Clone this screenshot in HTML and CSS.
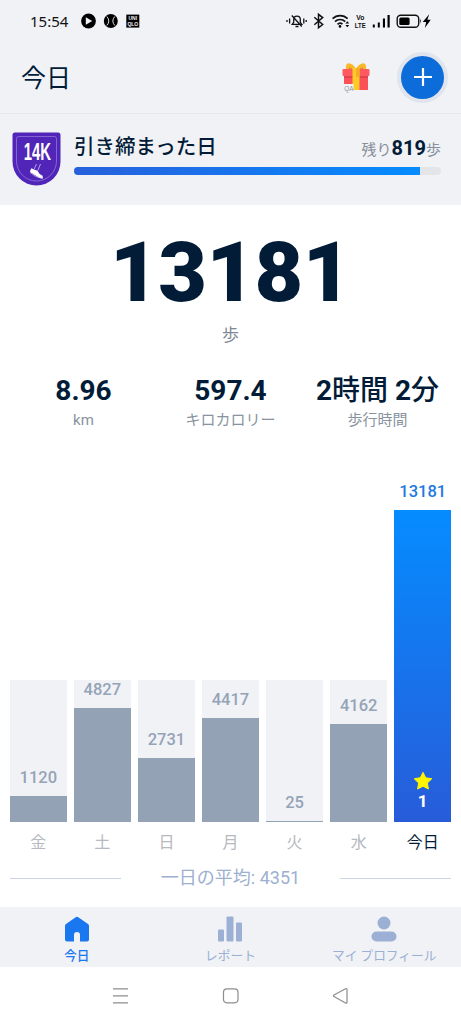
FILE: index.html
```html
<!DOCTYPE html>
<html lang="ja">
<head>
  <meta charset="UTF-8" />
  <meta name="viewport" content="width=device-width, initial-scale=1.0"/>
  <title>今日</title>
  <link rel="stylesheet" href="styles.css">
</head>
<body>

<!-- Status bar -->
<div class="status-bar">
  <span class="clock">15:54</span>
  <svg class="app-icons" width="62" height="20" viewBox="0 0 62 20">
    <circle cx="10.5" cy="10" r="7.4"/>
    <path d="M7.8 6.3v7.4l6.4-3.7z" fill="#f0f2f6"/>
    <circle cx="32.8" cy="10" r="7"/>
    <path d="M28.8 5.5q4 4.5 0 9M36.8 5.5q-4 4.5 0 9" fill="none" stroke="#f0f2f6" stroke-width=".9"/>
    <rect x="48.3" y="3.6" width="13" height="13"/>
    <text x="54.8" y="9.4" class="tiny-logo">UNI</text>
    <text x="54.8" y="15.4" class="tiny-logo">QLO</text>
  </svg>
  <svg class="sys-icons" width="148" height="20" viewBox="0 0 148 20">
    <!-- muted bell -->
    <g fill="none" stroke="#111" stroke-width="1.3">
      <path d="M6.2 13.3h9.6l-1.5-2V8.5a3.3 3.3 0 0 0-6.6 0v2.8zM9.5 15.5h3M5.8 4.5l10 11"/>
      <path d="M3.6 7.5v5M1 9v2M17.8 7.5v5M20.2 9v2"/>
    </g>
    <!-- bluetooth -->
    <path d="M28.3 6.3l8.4 7.2-4.2 3.3V3.3l4.2 3.3-8.4 7.2" fill="none" stroke="#111" stroke-width="1.5"/>
    <!-- wifi -->
    <path d="M46.6 7.7a10.5 10.5 0 0 1 15 0M49 10.7a7 7 0 0 1 10.2 0M51.5 13.3a3.7 3.7 0 0 1 5-.2" fill="none" stroke="#111" stroke-width="1.7"/>
    <circle cx="54" cy="15.4" r="1.3"/>
    <path d="M61.3 10.3l1.9 2.3h-3.8zM61.3 16.2l1.9-2.3h-3.8z"/>
    <text transform="translate(74.3 9) scale(.85 1)" class="volte">Vo</text>
    <text transform="translate(74.3 16.8) scale(.75 1)" class="volte">LTE</text>
    <!-- signal -->
    <path d="M86.8 13.6h2v3h-2zM91.8 11.5h2v5.1h-2zM96.9 7.5h2.1v9.1h-2.1zM101.5 4h2.2v12.6h-2.2z"/>
    <!-- battery -->
    <rect x="111.2" y="4.3" width="21.5" height="11.9" rx="3.5" fill="none" stroke="#111" stroke-width="1.4"/>
    <rect x="113.3" y="6.4" width="10.3" height="7.7" rx="1.5"/>
    <path d="M134 7.8q1.800 2.300 0 4.600z"/>
    <path d="M143.2 3.2l-6.500 7.900h3.500l-1.400 5.800 6-8.100h-3.400z"/>
  </svg>
</div>

<!-- Header -->
<div class="header">
  <h1>今日</h1>
  <svg class="gift" width="30" height="32" viewBox="0 0 30 32">
    <path d="M5 9q-1-8 4-6.500 4 1 6 5.500 2-4.500 6-5.500 5-1.500 4 6.500z" fill="#f9b92e"/>
    <path d="M8 8q0-4 3 0zM19 8q3-4 3 0z" fill="#e58e25"/>
    <rect x="1.500" y="8" width="27" height="7" rx="1" fill="#ff5a5f"/>
    <path d="M3 15h24v14H3z" fill="#fb5058"/>
    <path d="M3 15h24v2H3z" fill="#e0444e"/>
    <path d="M11.500 7h7v22h-7z" fill="#ffc928"/>
    <path d="M15 7h3.500v9H15z" fill="#f5ac26"/>
    <path d="M2 23h10.500v7H2z" fill="#f0f2f6"/>
    <text transform="translate(3.200 29.500) scale(.85 1)">QA</text>
  </svg>
  <button class="add-btn" aria-label="追加">
    <svg width="20" height="20" viewBox="0 0 20 20"><path d="M10 1v18M1 10h18" stroke="#fff" stroke-width="2.2"/></svg>
  </button>
</div>

<!-- Goal -->
<div class="goal">
  <svg class="badge" width="49" height="54" viewBox="0 0 49 54">
    <path d="M3 .5h43a2.500 2.500 0 0 1 2.500 2.500v26.500a24 24 0 0 1-48 0V3A2.500 2.500 0 0 1 3 .5z" fill="#5125b8"/>
    <path d="M6.500 4.500h36q2 0 2 2V29a20 20 0 0 1-40 0V6.500q0-2 2-2z" fill="none" stroke="#8f75da" stroke-width=".8"/>
    <text transform="translate(25.300 27.500) scale(.62 1)">14K</text>
    <path d="M24.500 32l-2.300 5M28.500 32l-2.700 6.500" stroke="#cfc3ef" stroke-width=".8" fill="none"/>
    <path d="M19.500 36.300l2.500 1.200 3.500 1.300q1.500 3.500 5 5l.5 2.700q-4.500-.3-7.500-3l-5.500-3.500q.2-2 1.500-3.700z" fill="#fff"/>
    <path d="M18 40.500q5 5 12.500 6" stroke="#cfc3ef" stroke-width=".7" fill="none"/>
  </svg>
  <div class="goal-info">
    <div class="goal-text">
      <h2>引き締まった日</h2>
      <p>残り<b>819</b>歩</p>
    </div>
    <div class="progress"><div class="progress-fill" style="width: 94.15%"></div></div>
  </div>
</div>

<main>
  <div class="steps">
    <div class="steps-count">13181</div>
    <div class="steps-unit">歩</div>
  </div>

  <div class="stats">
    <div><b>8.96</b><span>km</span></div>
    <div><b>597.4</b><span>キロカロリー</span></div>
    <div><b>2<i>時間</i> 2<i>分</i></b><span>歩行時間</span></div>
  </div>

  <!-- Weekly chart -->
  <div class="chart">
    <div class="day">
      <div class="track"><span>1120</span><div class="bar" style="height: 26px"></div></div>
      <p>金</p>
    </div>
    <div class="day">
      <div class="track"><span>4827</span><div class="bar" style="height: 114px"></div></div>
      <p>土</p>
    </div>
    <div class="day">
      <div class="track"><span>2731</span><div class="bar" style="height: 64px"></div></div>
      <p>日</p>
    </div>
    <div class="day">
      <div class="track"><span>4417</span><div class="bar" style="height: 104px"></div></div>
      <p>月</p>
    </div>
    <div class="day">
      <div class="track"><span>25</span><div class="bar" style="height: 1px"></div></div>
      <p>火</p>
    </div>
    <div class="day">
      <div class="track"><span>4162</span><div class="bar" style="height: 98px"></div></div>
      <p>水</p>
    </div>
    <div class="day today">
      <div class="track">
        <span>13181</span>
        <div class="bar" style="height: 312px">
          <svg width="20" height="20" viewBox="0 0 20 20"><path d="M10 1.300l2.700 5.500 6.100.9-4.400 4.300 1 6L10 15.200 4.600 18l1-6L1.200 7.700l6.100-.9z" fill="#fff500" stroke="#fff500" stroke-linejoin="round"/></svg>
          <b>1</b>
        </div>
      </div>
      <p>今日</p>
    </div>
  </div>

  <div class="average">一日の平均: 4351</div>
</main>

<!-- Tabs -->
<div class="tabs">
  <a class="active">
    <svg width="26" height="26" viewBox="0 0 26 26"><path d="M13 .8q.7 0 1.300.4l9.700 6.700q1 .7 1 1.900v13.700q0 2-2 2h-7v-6.700a3 2.800 0 0 0-6 0v6.700H3q-2 0-2-2V9.800q0-1.200 1-1.900l9.700-6.700q.6-.4 1.300-.4z"/></svg>
    今日
  </a>
  <a>
    <svg width="26" height="26" viewBox="0 0 26 26"><rect x="1" y="13.500" width="6" height="12" rx="1"/><rect x="9.500" y=".5" width="7" height="25" rx="1"/><rect x="19" y="6.500" width="6" height="19" rx="1"/></svg>
    レポート
  </a>
  <a>
    <svg width="26" height="26" viewBox="0 0 26 26"><circle cx="13" cy="7" r="6.500"/><rect x=".5" y="15.500" width="25" height="10" rx="5"/></svg>
    マイ プロフィール
  </a>
</div>

<!-- System navigation -->
<div class="nav">
  <svg width="18" height="18" viewBox="0 0 18 18"><path d="M1 1.800h15M1 8.800h15M1 15.800h15"/></svg>
  <svg width="18" height="18" viewBox="0 0 18 18"><rect x="1.500" y="1.800" width="14.500" height="14" rx="3.500"/></svg>
  <svg width="18" height="18" viewBox="0 0 18 18"><path d="M2 8.100L13.500 1.700q1.500-.6 1.500 1v12.200q0 1.600-1.500 1L2 9.500q-1.200-.7 0-1.400z"/></svg>
</div>

</body>
</html>
```

FILE: styles.css
```css
* { margin: 0; padding: 0; box-sizing: border-box; }
body {
  font-family: Roboto, 'Noto Sans CJK JP', sans-serif;
  background: #fff;
  color: #021c38;
  display: flex;
  flex-direction: column;
  height: 1024px;
  overflow: hidden;
}

svg {
  display: block;
  flex: none;
}

.status-bar {
  height: 41px;
  background: #f0f2f6;
  display: flex;
  align-items: center;
  padding: 0 27px 0 30px;
}

.clock {
  font-family: 'Noto Sans', sans-serif;
  font-size: 15px;
  color: #111;
  width: 48px;
  white-space: nowrap;
}

.sys-icons {
  margin-left: auto;
}

.tiny-logo {
  font: bold 5px 'Liberation Sans', sans-serif;
  fill: #f0f2f6;
  text-anchor: middle;
}

.volte {
  font: bold 8px/1 'Liberation Sans', sans-serif;
  fill: #111;
  text-anchor: middle;
}

.header {
  height: 73px;
  background: #f0f2f6;
  border-bottom: 1px solid #e6e8ed;
  display: flex;
  align-items: center;
  padding: 0 13px 0 21px;
}

.header h1 {
  font-size: 25px;
  font-weight: 400;
  line-height: 36px;
  padding-top: 3px;
}

.gift {
  margin-left: auto;
  margin-right: 26px;
}

.gift text {
  font: 7.5px 'Liberation Sans', sans-serif;
  fill: #8d929b;
}

.add-btn {
  width: 51px;
  height: 51px;
  border-radius: 50%;
  border: 4px solid #dfe4ed;
  background: #0b6cda;
  display: flex;
  align-items: center;
  justify-content: center;
}

.goal {
  height: 91px;
  background: #f0f2f6;
  display: flex;
  padding: 18px 20px 0 12px;
}

.badge text {
  font: bold 24px 'Liberation Sans', sans-serif;
  fill: #fff;
  text-anchor: middle;
}

.goal-info {
  flex: 1;
  margin-left: 13px;
}

.goal-text {
  display: flex;
  justify-content: space-between;
  height: 35px;
}

.goal-text h2 {
  font-size: 20.5px;
  font-weight: 500;
  line-height: 31px;
}

.goal-text p {
  font-size: 15px;
  line-height: 32px;
  color: #878f9b;
}

.goal-text b {
  font-size: 20px;
  color: #021c38;
}

.progress {
  height: 8px;
  border-radius: 4px;
  background: #e3e5e9;
  overflow: hidden;
}

.progress-fill {
  height: 100%;
  background: linear-gradient(90deg, #2860dc, #058cff);
}

main {
  height: 702px;
  padding: 0 10px;
}

.steps {
  text-align: center;
  padding-top: 19px;
}

.steps-count {
  font-size: 84px;
  font-weight: 900;
  line-height: 98px;
  letter-spacing: -0.5px;
}

.steps-unit {
  font-size: 17px;
  line-height: 26px;
  color: #7f8995;
}

.stats {
  display: grid;
  grid-template-columns: repeat(3, 1fr);
  text-align: center;
  padding-top: 25px;
}

.stats b {
  display: block;
  font-size: 28px;
  line-height: 36px;
  white-space: nowrap;
}

.stats i {
  font-style: normal;
  font-weight: 500;
}

.stats span {
  display: block;
  font-size: 15px;
  line-height: 22px;
  color: #8993a0;
}

.chart {
  display: grid;
  grid-template-columns: repeat(7, 1fr);
  gap: 7.5px;
  align-items: end;
  height: 424px;
}

.track {
  height: 142px;
  background: #f0f2f6;
  display: flex;
  flex-direction: column;
  justify-content: flex-end;
}

.track span {
  font-size: 16.5px;
  font-weight: 500;
  line-height: 20px;
  margin-bottom: 8px;
  text-align: center;
  color: #95a3b7;
}

.bar {
  flex: none;
  background: #93a3b5;
}

.day p {
  font-size: 16px;
  line-height: 24px;
  padding-top: 9px;
  text-align: center;
  color: #b6b9be;
}

.today .track {
  height: auto;
  background: none;
}

.today .track span {
  color: #2478df;
}

.today .bar {
  background: linear-gradient(#058cff, #285cd9);
  color: #fff;
  display: flex;
  flex-direction: column;
  align-items: center;
  justify-content: flex-end;
  padding-bottom: 11px;
}

.today .bar b {
  font-size: 17px;
  line-height: 20px;
}

.today p {
  color: #021c38;
}

.average {
  display: flex;
  align-items: center;
  justify-content: space-between;
  font-size: 18px;
  line-height: 26px;
  margin-top: 10px;
  color: #9db0d0;
  white-space: nowrap;
}

.average::before,
.average::after {
  content: "";
  width: 111px;
  height: 1px;
  background: #c9d5e6;
}

.tabs {
  height: 60px;
  background: #f0f2f5;
  display: grid;
  grid-template-columns: repeat(3, 1fr);
}

.tabs a {
  display: flex;
  flex-direction: column;
  align-items: center;
  padding-top: 9px;
  font-size: 12.7px;
  line-height: 21px;
  gap: 3px;
  color: #9bb0d4;
  fill: #9bb0d4;
  white-space: nowrap;
}

.tabs .active {
  color: #1978ef;
  fill: #1978ef;
  font-weight: 500;
}

.nav {
  height: 57px;
  display: flex;
  align-items: center;
  justify-content: center;
  gap: 92px;
}

.nav svg {
  fill: none;
  stroke: #8d8d8d;
  stroke-width: 1.2;
}
```
